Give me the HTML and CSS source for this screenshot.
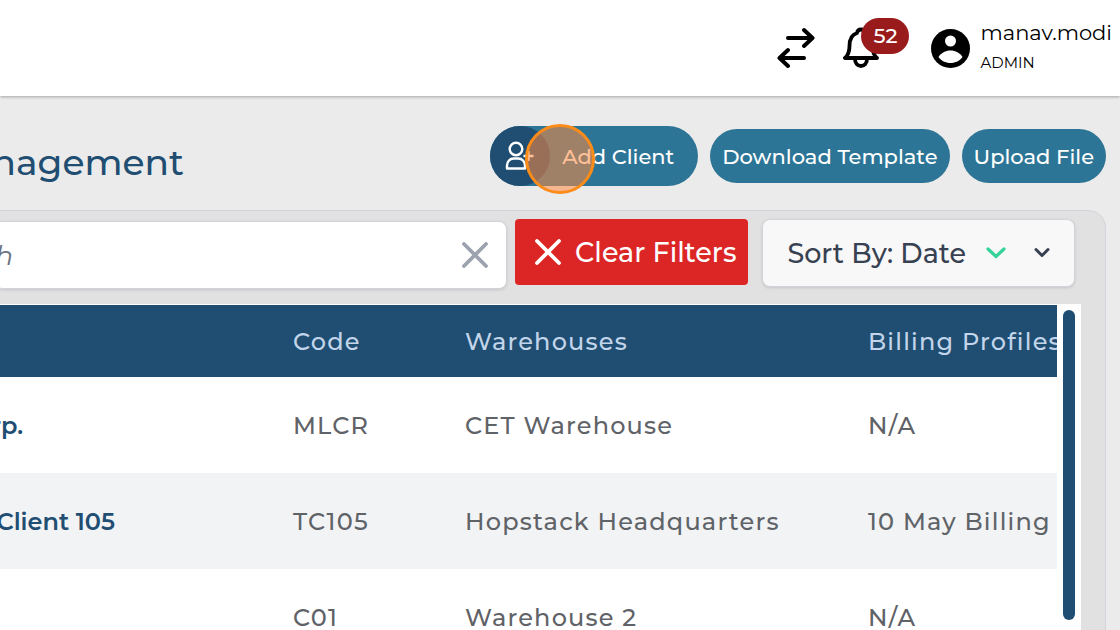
FILE: index.html
```html
<!DOCTYPE html>
<html lang="en">
<head>
    <meta charset="UTF-8">
    <meta name="viewport" content="width=device-width, initial-scale=1.0">
    <title>Client Management</title>
    <link rel="stylesheet" href="styles.css">
</head>
<body>
    <header class="topbar">
        <button class="icon-btn swap" aria-label="Switch">
            <svg width="38" height="42" viewBox="0 0 38 42" fill="none" stroke="#000" stroke-width="4" stroke-linecap="round" stroke-linejoin="round">
                <path d="M11 11H35M27 3L35.500 11L27 19M27 31H3M11 23L2.500 31L11 39"/>
            </svg>
        </button>
        <button class="icon-btn bell" aria-label="Notifications">
            <svg width="36" height="42" viewBox="0 0 36 42" fill="none" stroke="#000" stroke-width="3.800" stroke-linecap="round" stroke-linejoin="round">
                <path d="M2 31H34C30.500 28 29.500 25 29.500 19C29.500 12 26.500 7.500 22 6C21.500 3.500 20 2.500 18 2.500C16 2.500 14.500 3.500 14 6C9 7.500 6.500 12 6.500 19C6.500 25 5.500 28 2 31Z"/>
                <path d="M12 32C12 36 14.500 39 18 39C21.500 39 24 36 24 32"/>
            </svg>
            <span class="badge">52</span>
        </button>
        <div class="user">
            <svg width="39" height="39" viewBox="0 0 39 39">
                <circle cx="19.500" cy="19.500" r="19.500" fill="#000"/>
                <circle cx="19.500" cy="12" r="5.500" fill="#fff"/>
                <path d="M7.500 28C10 24 14.500 21.500 19.500 21.500S29 24 31.500 28C29 31.800 24.500 34 19.500 34S10 31.800 7.500 28Z" fill="#fff"/>
            </svg>
            <div class="user-text">
                <div class="user-name">manav.modi</div>
                <div class="user-role">ADMIN</div>
            </div>
        </div>
    </header>

    <div class="title-row">
        <h1>nagement</h1>
        <div class="actions">
            <button class="pill add-client">
                <span class="pill-icon">
                    <svg width="30" height="30" viewBox="0 0 30 30" fill="none" stroke="#fff" stroke-width="2.400" stroke-linejoin="round">
                        <circle cx="11" cy="8" r="6.300"/>
                        <path d="M2 27.500V24.500C2 20.500 5 17.500 8.500 17.500H13.500C17 17.500 20 20.500 20 24.500V27.500ZM18.500 15H28.500M23.500 10V20"/>
                    </svg>
                </span>
                Add Client
                <span class="click-mark"></span>
            </button>
            <button class="pill">Download Template</button>
            <button class="pill">Upload File</button>
        </div>
    </div>

    <main class="panel">
        <div class="filters">
            <div class="search">
                <input type="text" placeholder="h" aria-label="Search">
                <button class="icon-btn" aria-label="Clear search">
                    <svg width="26" height="26" viewBox="0 0 26 26" fill="none" stroke="#9ca3af" stroke-width="3.800" stroke-linecap="round">
                        <path d="M2 2L24 24M24 2L2 24"/>
                    </svg>
                </button>
            </div>
            <button class="clear">
                <svg width="26" height="26" viewBox="0 0 26 26" fill="none" stroke="#fff" stroke-width="3.800" stroke-linecap="round">
                    <path d="M2 2L24 24M24 2L2 24"/>
                </svg>
                Clear Filters
            </button>
            <button class="sort" aria-haspopup="listbox">
                <span class="sort-label">Sort By: Date</span>
                <svg width="20" height="12" viewBox="0 0 20 12" fill="none" stroke="#34d399" stroke-width="3.200" stroke-linecap="round" stroke-linejoin="round">
                    <path d="M2 2L10 9.500L18 2"/>
                </svg>
                <svg width="16" height="12" viewBox="0 0 16 12" fill="none" stroke="#374151" stroke-width="3" stroke-linecap="round" stroke-linejoin="round">
                    <path d="M2 2.500L8 8.500L14 2.500"/>
                </svg>
            </button>
        </div>

        <div class="table-area">
            <div class="table-wrap">
                <table>
                    <colgroup>
                        <col class="col-name">
                        <col class="col-code">
                        <col class="col-warehouse">
                        <col>
                    </colgroup>
                    <thead>
                        <tr><th></th><th>Code</th><th>Warehouses</th><th>Billing Profiles</th></tr>
                    </thead>
                    <tbody>
                        <tr><td><a href="#">rp.</a></td><td>MLCR</td><td>CET Warehouse</td><td>N/A</td></tr>
                        <tr><td><a href="#" class="long">Client 105</a></td><td>TC105</td><td>Hopstack Headquarters</td><td>10 May Billing</td></tr>
                        <tr><td></td><td>C01</td><td>Warehouse 2</td><td>N/A</td></tr>
                    </tbody>
                </table>
            </div>
            <div class="scrollbar"></div>
        </div>
    </main>
</body>
</html>
```
FILE: styles.css
```css
* {
    box-sizing: border-box;
}
body {
    display: flex;
    flex-direction: column;
    height: 100vh;
    margin: 0;
    overflow: hidden;
    background-color: #ebebeb;
    font-family: Montserrat, Inter, sans-serif;
}
button {
    border: none;
    font-family: inherit;
    font-weight: 500;
    white-space: nowrap;
    cursor: pointer;
}
svg {
    display: block;
    flex-shrink: 0;
}
.icon-btn {
    display: flex;
    padding: 0;
    background: none;
}

/* top bar */
.topbar {
    display: flex;
    flex-shrink: 0;
    align-items: center;
    justify-content: flex-end;
    height: 96px;
    padding-right: 8px;
    background-color: #fff;
    box-shadow: 0 1px 3px rgba(0, 0, 0, 0.3);
}
.bell {
    position: relative;
    margin: 0 52px 0 28px;
}
.badge {
    position: absolute;
    top: -9px;
    left: 18px;
    width: 48px;
    border-radius: 18px;
    background-color: #991b1b;
    color: #fff;
    font-size: 21px;
    line-height: 36px;
    text-align: center;
}
.user {
    display: flex;
    align-items: center;
    gap: 10px;
    color: #000;
}
.user-name {
    font-size: 21px;
    line-height: 30px;
}
.user-role {
    font-size: 15px;
    line-height: 30px;
}

/* title and actions */
.title-row {
    display: flex;
    flex-shrink: 0;
    align-items: center;
    justify-content: space-between;
    height: 114px;
    padding: 6px 14px 0 0;
}
h1 {
    display: flex;
    justify-content: flex-end;
    width: 184px;
    margin: 12px 0 0;
    color: #1f4e72;
    font-size: 36px;
    font-weight: 500;
    line-height: 48px;
}
.actions {
    display: flex;
    align-items: center;
    gap: 12px;
}
.pill {
    height: 54px;
    padding: 0 12px;
    border-radius: 30px;
    background-color: #2c7596;
    color: #fff;
    font-size: 21px;
}
.add-client {
    position: relative;
    display: flex;
    align-items: center;
    gap: 12px;
    height: 60px;
    padding: 0 24px 0 0;
}
.pill-icon {
    display: flex;
    align-items: center;
    justify-content: center;
    width: 60px;
    height: 60px;
    border-radius: 50%;
    background-color: #1f4e72;
}
.click-mark {
    position: absolute;
    top: -2px;
    left: 35px;
    width: 70px;
    height: 70px;
    border: 3px solid #fc8c1a;
    border-radius: 50%;
    background-color: rgba(255, 139, 66, 0.55);
}

/* panel */
.panel {
    display: flex;
    flex: 1;
    flex-direction: column;
    min-height: 0;
    margin-right: 14px;
    padding-right: 24px;
    border: 1px solid #d1d5db;
    border-width: 1px 1px 0 0;
    border-radius: 0 18px 0 0;
    background-color: #e1e1e1;
}
.filters {
    display: flex;
    align-items: flex-start;
    padding: 8px 6px 15px 0;
}
.search,
.sort {
    display: flex;
    align-items: center;
    height: 68px;
    border: 1px solid #d1d5db;
    border-radius: 8px;
    box-shadow: 0 1px 3px rgba(0, 0, 0, 0.12);
}
.search {
    flex: 1;
    min-width: 0;
    margin: 2px 8px 0 -6px;
    padding-right: 18px;
    background-color: #fff;
}
.search input {
    flex: 1;
    min-width: 0;
    padding: 0;
    border: none;
    background: none;
    font-family: inherit;
    font-size: 27px;
}
.search input::placeholder {
    color: #6b7280;
    font-style: italic;
}
.clear {
    display: flex;
    align-items: center;
    gap: 14px;
    height: 66px;
    margin-right: 14px;
    padding: 0 12px 0 20px;
    border-radius: 4px;
    background-color: #dc2626;
    color: #fff;
    font-size: 27px;
}
.sort {
    gap: 28px;
    padding: 0 24px;
    background-color: #f8f8f8;
    color: #374151;
    font-size: 27px;
}
.sort-label {
    margin-right: -8px;
}

/* table */
.table-area {
    display: flex;
    flex: 1;
    min-height: 0;
    background-color: #fff;
}
.table-wrap {
    flex: 1;
    min-width: 0;
    padding-top: 1px;
    overflow: hidden;
}
table {
    width: 100%;
    border-collapse: collapse;
    table-layout: fixed;
    color: #5f6368;
    font-size: 24px;
    letter-spacing: 0.05em;
    white-space: nowrap;
}
.col-name {
    width: 293px;
}
.col-code {
    width: 172px;
}
.col-warehouse {
    width: 403px;
}
th,
td {
    height: 96px;
    padding: 0;
    font-weight: 500;
    text-align: left;
}
th {
    height: 72px;
    background-color: #1f4e72;
    color: #c3d5ea;
}
tbody tr:nth-child(even) {
    background-color: #f2f3f5;
}
td a {
    display: flex;
    justify-content: flex-end;
    width: 23px;
    color: #1f4e72;
    font-weight: 600;
    letter-spacing: normal;
    text-decoration: none;
}
td a.long {
    width: 115px;
}
.scrollbar {
    width: 12px;
    margin: 6px 6px 10px;
    border-radius: 6px;
    background-color: #1f4e72;
}
```
